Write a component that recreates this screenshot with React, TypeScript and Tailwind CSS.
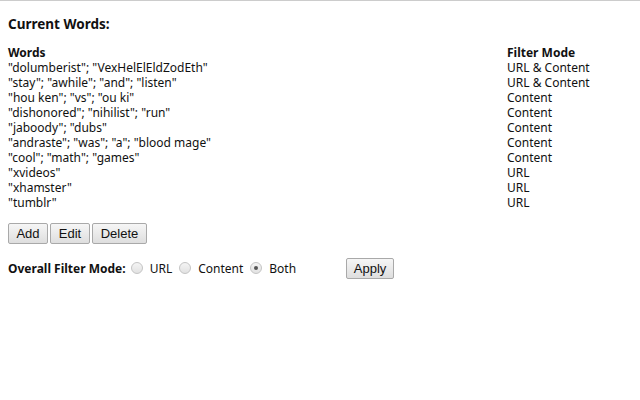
import React from "react";

const rows: [string, string][] = [
  ['"dolumberist"; "VexHelElEldZodEth"', "URL & Content"],
  ['"stay"; "awhile"; "and"; "listen"', "URL & Content"],
  ['"hou ken"; "vs"; "ou ki"', "Content"],
  ['"dishonored"; "nihilist"; "run"', "Content"],
  ['"jaboody"; "dubs"', "Content"],
  ['"andraste"; "was"; "a"; "blood mage"', "Content"],
  ['"cool"; "math"; "games"', "Content"],
  ['"xvideos"', "URL"],
  ['"xhamster"', "URL"],
  ['"tumblr"', "URL"],
];

function Btn({ children, className = "" }: { children: React.ReactNode; className?: string }) {
  return (
    <button
      className={
        "h-[21px] border border-[#a9a9a9] rounded-[2px] bg-gradient-to-b from-[#f6f6f6] to-[#dedede] text-[13px] text-[#111] leading-none font-['Liberation_Sans',Arial,sans-serif] " +
        className
      }
    >
      {children}
    </button>
  );
}

function Radio({ checked = false }: { checked?: boolean }) {
  return (
    <span className="w-[12px] h-[12px] rounded-full border border-[#c4c4c4] bg-gradient-to-b from-[#f4f4f4] to-[#e2e2e2] flex items-center justify-center">
      {checked && <span className="w-[4px] h-[4px] rounded-full bg-[#555]" />}
    </span>
  );
}

export default function App() {
  return (
    <div className="w-[640px] h-[400px] bg-white border-t border-[#cccccc] text-[#111] font-['Noto_Sans',sans-serif] text-[12px] leading-[15px]">
      <div className="pl-[8px] pt-[15px]">
        <div className="font-bold text-[13.5px] leading-[16px]">Current Words:</div>
        <div className="mt-[13px] flex flex-col">
          <div className="flex font-bold h-[15px]">
            <div className="w-[499px]">Words</div>
            <div>Filter Mode</div>
          </div>
          {rows.map(([w, m], i) => (
            <div key={i} className="flex h-[15px]">
              <div className="w-[499px]">{w}</div>
              <div>{m}</div>
            </div>
          ))}
        </div>
        <div className="mt-[13px] flex gap-[2px]">
          <Btn className="w-[40px]">Add</Btn>
          <Btn className="w-[40px]">Edit</Btn>
          <Btn className="w-[55px]">Delete</Btn>
        </div>
        <div className="mt-[14px] flex items-center h-[20px]">
          <span className="font-bold mr-[5px]">Overall Filter Mode:</span>
          <Radio />
          <span className="ml-[7px] mr-[7px]">URL</span>
          <Radio />
          <span className="ml-[7px] mr-[7px]">Content</span>
          <Radio checked />
          <span className="ml-[7px]">Both</span>
          <Btn className="ml-[50px] w-[48px]">Apply</Btn>
        </div>
      </div>
    </div>
  );
}
